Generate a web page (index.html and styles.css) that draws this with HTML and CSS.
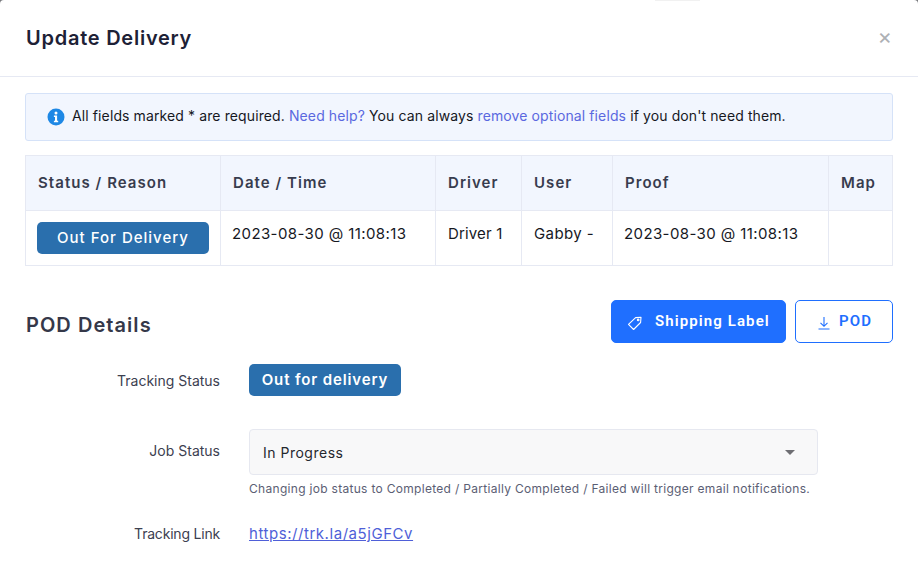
FILE: index.html
```html
<!DOCTYPE html>
<html lang="en">
<head>
<meta charset="utf-8">
<title>Update Delivery</title>
<link rel="stylesheet" href="styles.css">
</head>
<body>
<div class="modal">
  <header class="modal-header">
    <h1>Update Delivery</h1>
    <span class="close">×</span>
  </header>
  <main class="modal-body">
    <div class="alert">
      <svg class="info" viewBox="0 0 18 18" width="18" height="18"><circle cx="9" cy="9" r="8.5" fill="#1e88e5"/><circle cx="9" cy="5" r="1.5" fill="#fff"/><path d="M6.9 7.6h3.2v5.2h1.1v1.4H6.9v-1.4H8V9H6.9z" fill="#fff"/></svg>
      <p>All fields marked * are required. <a href="#">Need help?</a> You can always <a href="#">remove optional fields</a> if you don't need them.</p>
    </div>
    <table class="history">
      <colgroup><col class="c1"><col class="c2"><col class="c3"><col class="c4"><col class="c5"><col class="c6"></colgroup>
      <thead>
        <tr><th>Status / Reason</th><th>Date / Time</th><th>Driver</th><th>User</th><th>Proof</th><th>Map</th></tr>
      </thead>
      <tbody>
        <tr><td><span class="status-pill">Out For Delivery</span></td><td class="stamp">2023-08-30 @ 11:08:13</td><td class="driver">Driver 1</td><td>Gabby -</td><td class="stamp">2023-08-30 @ 11:08:13</td><td></td></tr>
      </tbody>
    </table>
    <section class="pod-head">
      <h2>POD Details</h2>
      <div class="actions">
        <button class="btn btn-solid">
          <svg viewBox="0 0 16 16" width="16" height="16" fill="none" stroke="#fff" stroke-width="1.1" stroke-linejoin="round"><path d="M1.5 9.3 8.6 2.6l5.4-.4-.4 5.3-7 7z"/><circle cx="11.2" cy="4.9" r=".8"/></svg>
          Shipping Label
        </button>
        <button class="btn btn-outline">
          <svg viewBox="0 0 14 14" width="14" height="14" fill="none" stroke="#1f6fff" stroke-width="1.1"><path d="M7 1v9M3.5 6.8 7 10.3l3.5-3.5M1.5 13h11"/></svg>
          POD
        </button>
      </div>
    </section>
    <div class="form">
      <div class="row row-track">
        <label>Tracking Status</label>
        <div><span class="badge">Out for delivery</span></div>
      </div>
      <div class="row row-job">
        <label>Job Status</label>
        <div class="field">
          <div class="select"><span>In Progress</span><i class="caret"></i></div>
          <small>Changing job status to Completed / Partially Completed / Failed will trigger email notifications.</small>
        </div>
      </div>
      <div class="row row-link">
        <label>Tracking Link</label>
        <div class="link-cell"><a class="track" href="#">https://trk.la/a5jGFCv</a></div>
      </div>
    </div>
  </main>
</div>
</body>
</html>
```
FILE: styles.css
```css
* { box-sizing: border-box; }
html, body { margin: 0; height: 100%; overflow: hidden; background: #77787c; }
body { font-family: "Inter", "Liberation Sans", sans-serif; color: #1c1f2b; }
.modal { position: relative; width: 918px; height: 572px; background: #fff; border-radius: 4px 4px 0 0; }
.modal::before { content: ""; position: absolute; top: 0; left: 655px; width: 45px; height: 1px; background: #f1f1f1; }
.modal-header { height: 77px; border-bottom: 1px solid #e6e9f3; display: flex; align-items: center; justify-content: space-between; padding: 0 26px 0 26px; }
h1 { margin: 0; font-size: 20px; font-weight: 600; letter-spacing: .75px; color: #1d2136; }
.close { font-size: 22px; line-height: 22px; color: #adb0b5; margin-bottom: 4px; }
.modal-body { padding: 16px 25px 0; }
.alert { height: 48px; background: #f2f6fe; border: 1px solid #d5e2f8; border-radius: 3px; display: flex; align-items: center; gap: 7px; padding: 0 0 3px 21px; font-size: 14px; }
.alert svg { margin-top: 3px; }
.alert p { margin: 0; color: #16181f; letter-spacing: .11px; }
.alert a { color: #5a68e0; text-decoration: none; }
.info { flex: none; }
.history { margin-top: 14px; width: 867px; border-collapse: collapse; table-layout: fixed; font-size: 15px; border: 1px solid #e6e9f3; }
.c1 { width: 195px; } .c2 { width: 215px; } .c3 { width: 86px; } .c4 { width: 91px; } .c5 { width: 216px; } .c6 { width: 64px; }
th, td { border: 1px solid #e6e9f3; text-align: left; padding: 0 12px; }
th { height: 55px; background: #f2f6fe; font-weight: 600; letter-spacing: 1.05px; color: #383c4e; font-size: 15px; padding-bottom: 2px; }
td { height: 55px; vertical-align: top; padding-top: 13px; color: #16181f; letter-spacing: .4px; }
td.stamp { padding-left: 11px; }
td.driver { letter-spacing: .15px; }
.status-pill { display: block; width: 172px; height: 32px; margin: -2px 0 0 -1px; background: #2a6fad; color: #fff; border-radius: 5px; text-align: center; line-height: 32px; font-weight: 500; letter-spacing: 1px; }
.pod-head { display: flex; justify-content: space-between; align-items: center; margin-top: 34px; height: 43px; padding-left: 1px; }
h2 { margin: 0; font-size: 20px; font-weight: 600; letter-spacing: 1.05px; color: #353849; position: relative; top: 3px; }
.actions { display: flex; gap: 9px; }
.btn { height: 43px; border-radius: 5px; font-family: "Roboto", sans-serif; font-size: 15px; font-weight: 600; letter-spacing: 1.1px; display: flex; align-items: center; padding: 0 0 2px; }
.btn svg { margin-top: 4px; }
.btn-solid { width: 175px; background: #1f6fff; border: 1px solid #1f6fff; color: #fff; gap: 12px; padding-left: 15px; }
.btn-outline { width: 98px; background: #fff; border: 1px solid #1f6fff; color: #1f6fff; gap: 8px; padding-left: 21px; }
.form { font-size: 14px; }
.row { display: grid; grid-template-columns: 195px 1fr; column-gap: 29px; }
.row label { text-align: right; color: #3c4050; }
.row-track { margin-top: 21px; height: 65px; }
.row-track label { padding-top: 8px; }
.badge { display: inline-block; width: 152px; height: 32px; line-height: 32px; background: #2a6fad; color: #fff; border-radius: 5px; text-align: center; font-size: 15px; font-weight: 600; letter-spacing: .87px; }
.row-job { height: 94px; }
.row-job label { padding-top: 13px; }
.select { width: 569px; height: 46px; background: #f8f8f9; border: 1px solid #e6e8f0; border-radius: 4px; display: flex; align-items: center; justify-content: space-between; padding: 0 22px 0 13px; letter-spacing: .5px; color: #25272e; }
.caret { width: 0; height: 0; border-left: 5px solid transparent; border-right: 5px solid transparent; border-top: 5px solid #6e6e73; }
small { display: block; margin-top: 6px; font-size: 12px; color: #5b5e74; letter-spacing: .3px; }
.row-link label { padding-top: 2px; letter-spacing: -.2px; }
.link-cell { padding-top: 1px; }
.track { color: #4f5fd8; font-size: 15px; letter-spacing: .55px; }
```
